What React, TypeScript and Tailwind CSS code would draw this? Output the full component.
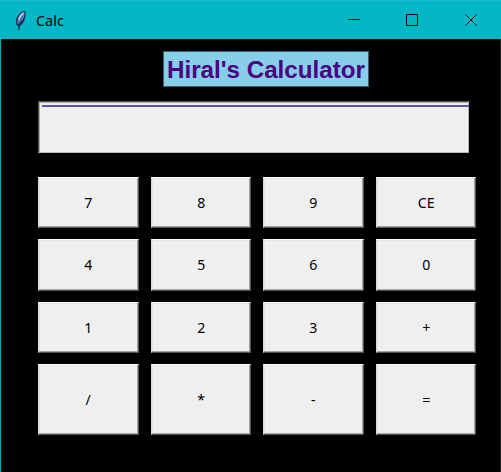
import React from "react";

type Key = { label: string; id: string };

const keys: Key[] = ["7", "8", "9", "CE", "4", "5", "6", "0", "1", "2", "3", "+", "/", "*", "-", "="].map(
  (label) => ({ label, id: `key-${label}` })
);

function Feather() {
  return (
    <svg width="13" height="21" viewBox="0 0 13 21" className="block" aria-hidden="true">
      <path d="M11.300.700C8 .900 5 3.500 3.300 6.500 1.900 9 1.700 12 2.500 15l1.500 1L4.500 20l1-.1.300-4C8.500 14.500 10.500 11 11 8c.8-2.500.9-5 .3-7.300Z" fill="#172b46" />
      <path d="M10.500 1.700C7.500 2.800 5 5.500 4 8.500c-.7 2-.9 4-.4 5.800C6.500 12.800 9.300 9.500 10 6.500c.6-2 .8-3.500.5-4.800Z" fill="#5e8dd0" />
      <path d="M9.500 3C7 4.500 5.500 7 4.900 9.500" stroke="#b4ccf2" strokeWidth="1.500" fill="none" />
      <path d="M8.800 5.500C7.500 8.500 5.500 11.500 4.500 15" stroke="#28457a" strokeWidth=".7" fill="none" />
    </svg>
  );
}

function TitleBar() {
  return (
    <header className="flex h-[39px] items-center border-t border-[#19bbc8] bg-[#04b7c6] text-black">
      <div className="ml-[14px]">
        <Feather />
      </div>
      <div className="ml-[9px] flex-1 pb-px font-['Noto_Sans',sans-serif] text-[15px] leading-5">
        <span className="inline-block origin-left scale-x-[.96]">Calc</span>
      </div>
      <svg width="153" height="38" viewBox="0 0 153 38" fill="none" stroke="black" aria-hidden="true">
        <path d="M0 18.500h12M58.500 13.500h11v11h-11zM117.500 13.500l11 11M128.500 13.500l-11 11" />
      </svg>
    </header>
  );
}

function CalcButton({ label }: { label: string }) {
  return (
    <button className="border border-t-white border-r-[#555] border-b-[#555] border-l-[#d8d8d8] bg-[#efefef] pb-px font-['Noto_Sans',sans-serif] text-[15px] leading-5 text-black shadow-[inset_-1px_-1px_0_#a3a3a3,inset_1px_1px_0_#e5e5e5]">
      <span className="block origin-center scale-x-[.94]">{label}</span>
    </button>
  );
}

export default function App() {
  return (
    <div className="h-[472px] w-[501px] overflow-hidden bg-black">
      <TitleBar />
      <main className="h-[433px] border-r border-l border-r-[#252525] border-l-[#04a6b4] pt-[12px]">
        <h1 className="ml-[162px] flex h-[36px] w-[206px] items-center justify-center border border-[#3e606d] bg-[#87ceeb] pt-px font-['Liberation_Sans',Arial,sans-serif] text-[24.200px] leading-7 font-bold whitespace-nowrap text-[#4b0082]">
          Hiral's Calculator
        </h1>
        <div className="mt-[14px] ml-[37px] h-[52px] w-[431px] border border-t-[#555] border-r-[#b5b5b5] border-b-[#b9b9b9] border-l-[#555] bg-[#efefef] pt-[3px] pl-[3px] shadow-[inset_1px_1px_0_#aaa]">
          <div className="-mr-px h-[2px] bg-[#5c55b0]" />
        </div>
        <div className="mt-[23.500px] ml-[37.300px] grid grid-cols-[repeat(4,100.500px)] grid-rows-[51.500px_51.500px_51.500px_70.500px] gap-x-[12px] gap-y-[11px]">
          {keys.map((key) => (
            <CalcButton key={key.id} label={key.label} />
          ))}
        </div>
      </main>
    </div>
  );
}
